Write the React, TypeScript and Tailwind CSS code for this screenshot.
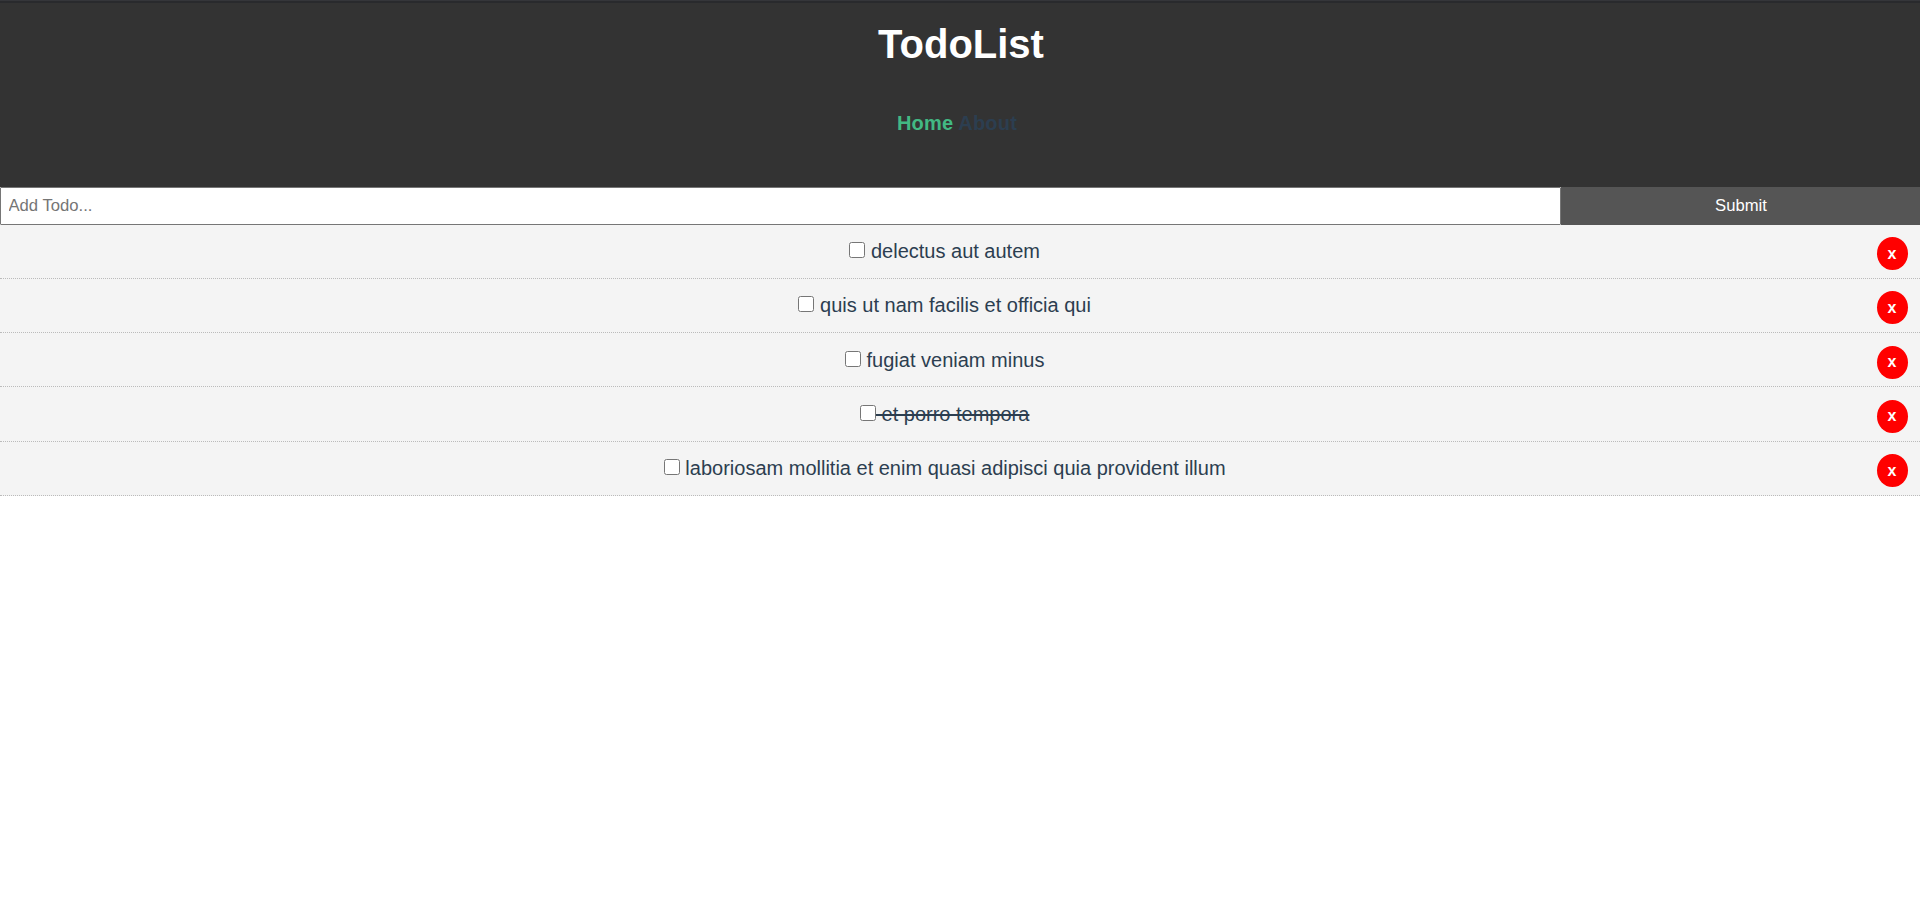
import { useState } from "react";

type Todo = { id: number; title: string; completed: boolean };

const initialTodos: Todo[] = [
  { id: 1, title: "delectus aut autem", completed: false },
  { id: 2, title: "quis ut nam facilis et officia qui", completed: false },
  { id: 3, title: "fugiat veniam minus", completed: false },
  { id: 4, title: "et porro tempora", completed: true },
  { id: 5, title: "laboriosam mollitia et enim quasi adipisci quia provident illum", completed: false },
];

function Header() {
  return (
    <header className="h-[187px] border-t border-[#35363a] bg-[#333] text-center">
      <div className="h-0.5 bg-[#292a2d]" />
      <h1 className="pt-[13px] pl-0.5 text-[40px] leading-[56px] font-bold text-white">TodoList</h1>
      <nav className="mt-[37px] pr-1.5 text-[20px] leading-[28px] font-bold tracking-[0.2px]">
        <a href="#home" className="text-[#42b983]">Home</a>{" "}
        <a href="#about" className="text-[#2c3e50]">About</a>
      </nav>
    </header>
  );
}

function AddTodo({ onAdd }: { onAdd: (title: string) => void }) {
  const [title, setTitle] = useState("");
  return (
    <form
      className="flex h-[37.6px] items-start"
      onSubmit={(e) => {
        e.preventDefault();
        if (title) onAdd(title);
        setTitle("");
      }}
    >
      <input
        type="text"
        value={title}
        onChange={(e) => setTitle(e.target.value)}
        placeholder="Add Todo..."
        className="h-[38px] w-[1561px] rounded-[1px] border border-[#767676] bg-white pr-2 pl-[7.5px] text-[16.67px] text-black outline-none placeholder:text-[#757575]"
      />
      <button type="submit" className="h-[38px] flex-1 bg-[#555] pb-px pl-px text-[16.67px] text-white">
        Submit
      </button>
    </form>
  );
}

function TodoItem({ todo, onToggle, onDelete }: { todo: Todo; onToggle: () => void; onDelete: () => void }) {
  return (
    <div
      className={`h-[54.25px] border-b border-dotted border-[#bbb] bg-[#f4f4f4] px-[12.5px] pt-[12.5px] text-center text-[20px] leading-[28px] ${
        todo.completed ? "line-through" : ""
      }`}
    >
      <button
        type="button"
        onClick={onDelete}
        className="float-right h-[33px] w-[31px] rounded-[50%] bg-[#f00] pb-px text-[16px] leading-[19px] font-bold text-white"
      >
        x
      </button>
      <input type="checkbox" onChange={onToggle} className="ml-[0.4px] h-4 w-4 align-[0px]" />
      {" " + todo.title}
    </div>
  );
}

export default function App() {
  const [todos, setTodos] = useState(initialTodos);
  return (
    <div className="min-h-screen bg-white font-['Liberation_Sans',Arial,sans-serif] text-[#2c3e50]">
      <Header />
      <AddTodo onAdd={(title) => setTodos([...todos, { id: Date.now(), title, completed: false }])} />
      {todos.map((todo) => (
        <TodoItem
          key={todo.id}
          todo={todo}
          onToggle={() => setTodos(todos.map((t) => (t.id === todo.id ? { ...t, completed: !t.completed } : t)))}
          onDelete={() => setTodos(todos.filter((t) => t.id !== todo.id))}
        />
      ))}
    </div>
  );
}
